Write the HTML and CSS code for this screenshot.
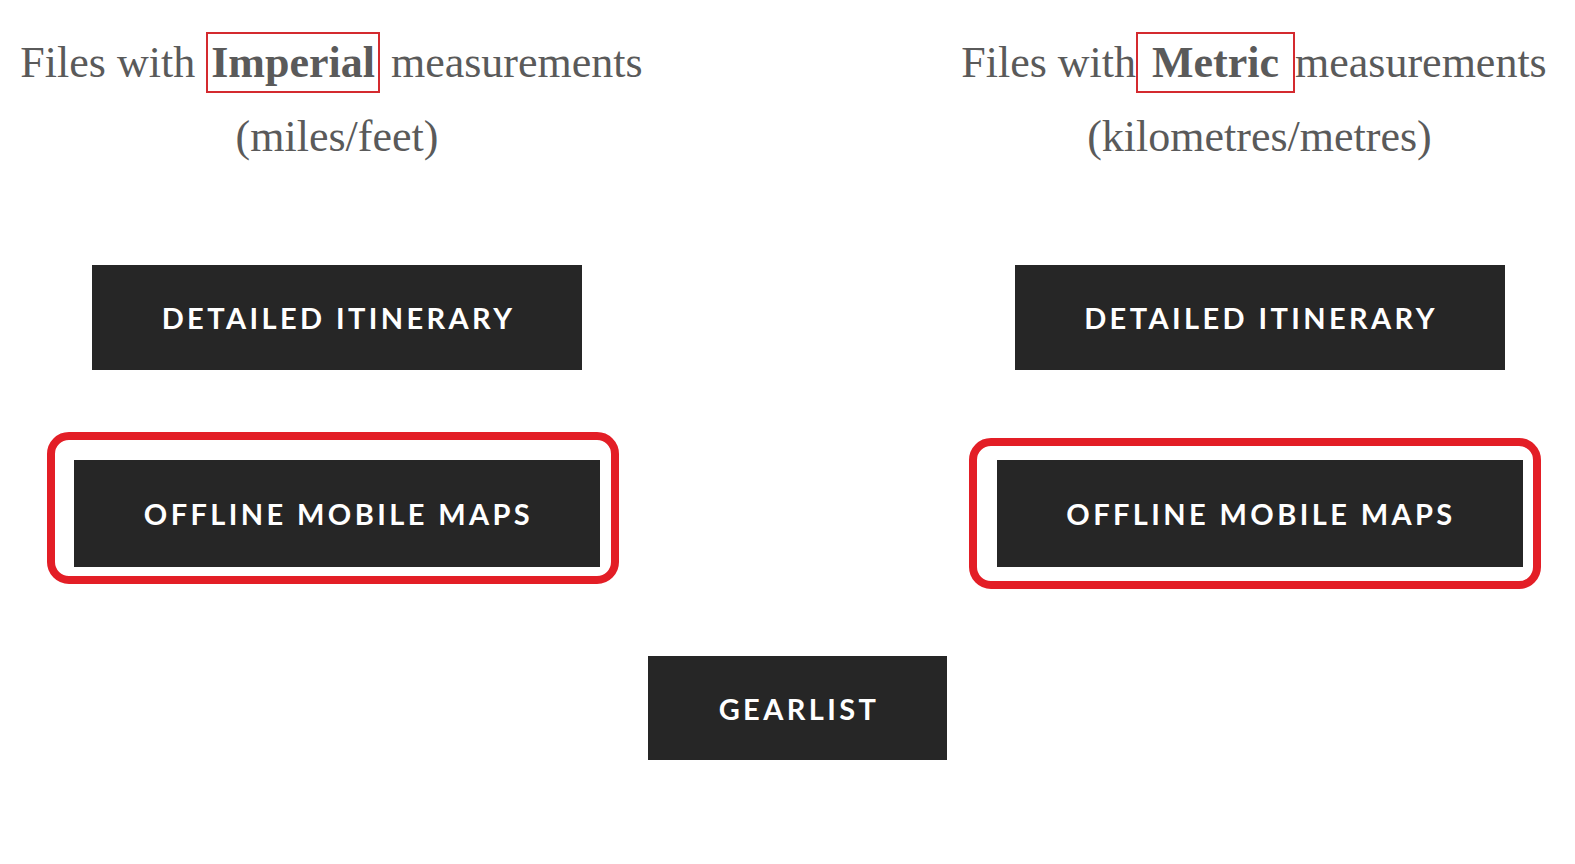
FILE: index.html
```html
<!DOCTYPE html>
<html>
<head>
    <title>Route Files</title>
    <link rel="stylesheet" href="styles.css">
</head>
<body>
    <div class="downloads">
        <!-- Imperial column -->
        <section class="units">
            <p class="units-title">
                <span class="units-name">Files with <span class="mark">Imperial</span> measurements</span>
                <span class="units-scale">(miles/feet)</span>
            </p>
            <div class="btn-list">
                <a href="#" class="btn btn-itinerary">DETAILED ITINERARY</a>
                <div class="ring-wrap">
                    <a href="#" class="btn btn-maps">OFFLINE MOBILE MAPS</a>
                    <span class="ring ring-left"></span>
                </div>
            </div>
        </section>

        <!-- Metric column -->
        <section class="units">
            <p class="units-title">
                <span class="units-name">Files with<span class="mark"> Metric </span>measurements</span>
                <span class="units-scale">(kilometres/metres)</span>
            </p>
            <div class="btn-list">
                <a href="#" class="btn btn-itinerary">DETAILED ITINERARY</a>
                <div class="ring-wrap">
                    <a href="#" class="btn btn-maps">OFFLINE MOBILE MAPS</a>
                    <span class="ring ring-right"></span>
                </div>
            </div>
        </section>
    </div>

    <div class="shared">
        <a href="#" class="btn btn-gear">GEARLIST</a>
    </div>
</body>
</html>
```
FILE: styles.css
```css
body {
    margin: 0;
    background-color: #fff;
    font-family: "Liberation Serif", serif;
}
.downloads {
    display: grid;
    grid-template-columns: 674px 631px;
    column-gap: 270px;
}
.units {
    display: flex;
    flex-direction: column;
    align-items: center;
}
.units-title {
    display: flex;
    flex-direction: column;
    align-items: center;
    margin: 26px 0 0;
    font-size: 44px;
    line-height: 74px;
    color: #5a5a5a;
    white-space: nowrap;
}
.units-name {
    margin-right: 11px;
}
.mark {
    font-weight: bold;
    border: 2px solid #d42a2f;
    padding: 4px 3px 4px;
}
.btn-list {
    display: flex;
    flex-direction: column;
    align-items: center;
    gap: 90px;
    margin-top: 91px;
}
.btn {
    display: flex;
    align-items: center;
    justify-content: center;
    background-color: #262626;
    color: #fff;
    font-family: Lato, sans-serif;
    font-weight: bold;
    font-size: 29px;
    letter-spacing: 3.4px;
    text-decoration: none;
    box-sizing: border-box;
    padding-left: 3px;
}
.btn-itinerary {
    width: 490px;
    height: 105px;
}
.btn-maps {
    width: 526px;
    height: 107px;
}
.ring-wrap {
    position: relative;
}
.ring {
    position: absolute;
    border: 8px solid #e31e26;
    border-radius: 22px;
}
.ring-left {
    left: -27px;
    right: -19px;
    top: -28px;
    bottom: -17px;
}
.ring-right {
    left: -28px;
    right: -18px;
    top: -22px;
    bottom: -22px;
}
.shared {
    display: flex;
    justify-content: center;
    padding-left: 20px;
    margin-top: 89px;
}
.btn-gear {
    width: 299px;
    height: 104px;
}
```
